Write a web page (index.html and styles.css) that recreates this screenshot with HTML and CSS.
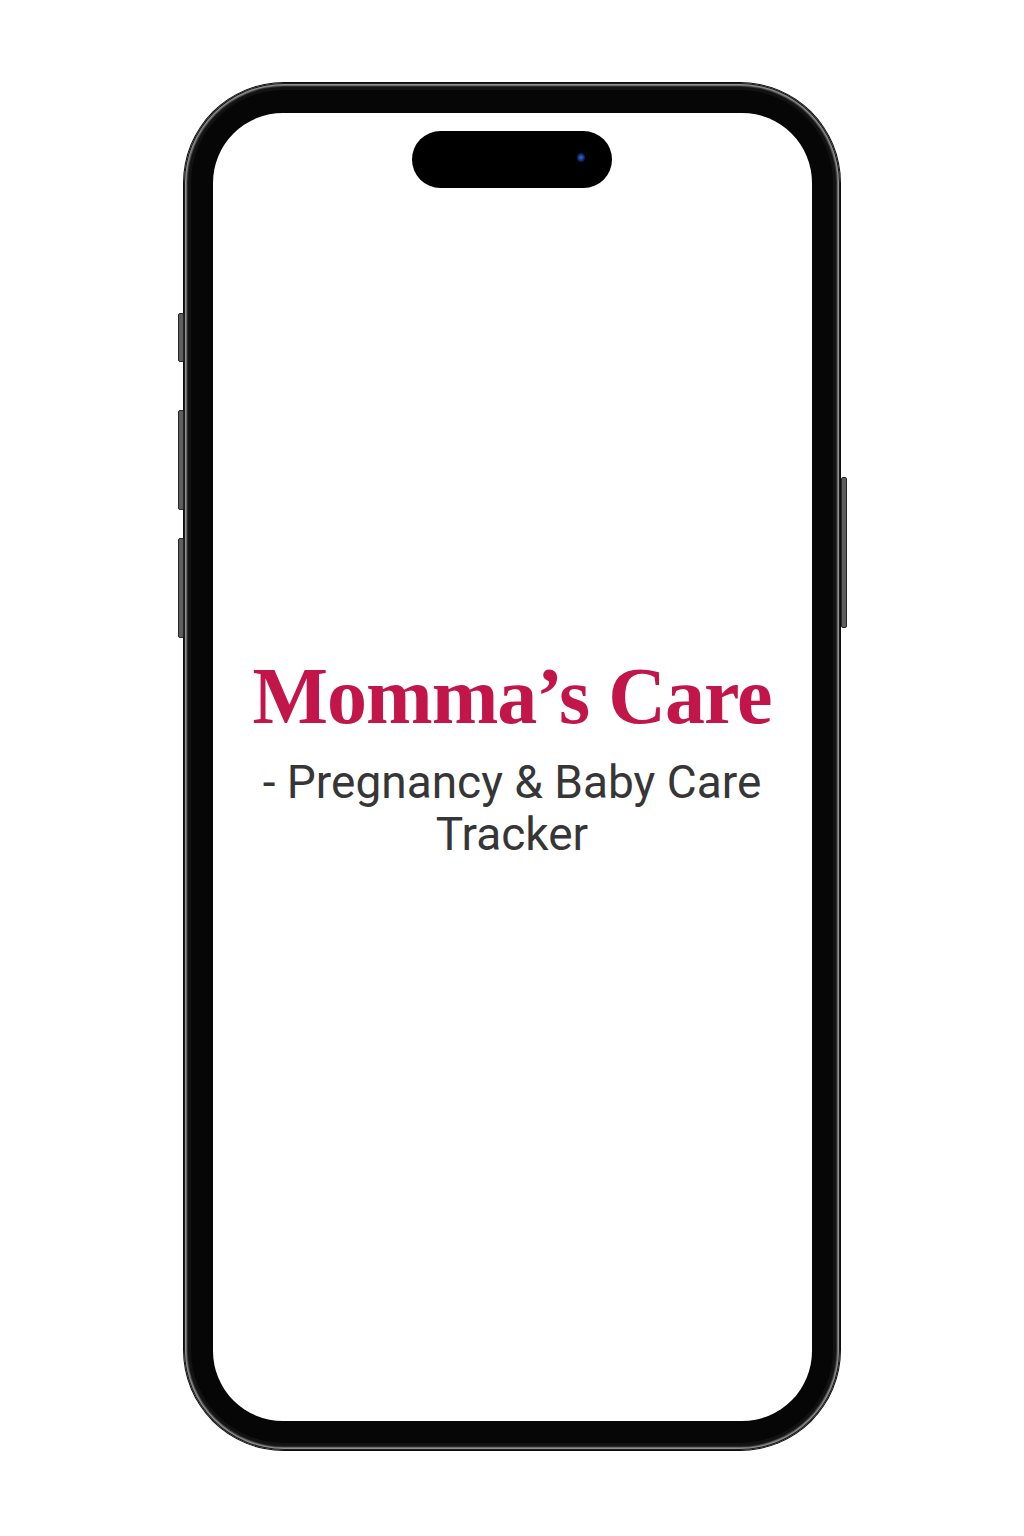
FILE: index.html
```html
<!DOCTYPE html>
<html lang="en">
<head>
<meta charset="utf-8">
<title>Momma's Care</title>
<link rel="stylesheet" href="styles.css">
</head>
<body>
<div class="stage">
  <div class="phone">
    <span class="btn btn-action"></span>
    <span class="btn btn-vol-up"></span>
    <span class="btn btn-vol-down"></span>
    <span class="btn btn-power"></span>
    <div class="screen">
      <div class="island"><span class="camera"></span></div>
      <div class="brand">
        <h1 class="title">Momma’s Care</h1>
        <p class="subtitle">- Pregnancy &amp; Baby Care<br>Tracker</p>
      </div>
    </div>
  </div>
</div>
</body>
</html>
```

FILE: styles.css
```css
html, body {
  margin: 0;
  padding: 0;
  background: #ffffff;
}

.stage {
  width: 1024px;
  height: 1536px;
  display: flex;
  justify-content: center;
  align-items: flex-start;
  padding-top: 83px;
  box-sizing: border-box;
}

.phone {
  position: relative;
  width: 656px;
  height: 1367px;
  box-sizing: border-box;
  padding: 30px 28px 29px 29px;
  border-radius: 100px;
  background: #060606;
  box-shadow:
    0 0 0 1px #0e0e0e,
    inset 0 0 0 1px #1a1a1a,
    inset 0 0 0 2px #909090,
    inset 0 0 0 3px #6a6a6a,
    inset 0 0 0 4px #2a2a2a,
    inset 0 0 0 7px #121212;
  margin-left: -1px;
}

.btn {
  position: absolute;
  width: 6px;
  background: #5e5e5e;
  border: 1px solid #262626;
  box-sizing: border-box;
  border-radius: 2px;
}

.btn-action   { left: -6px; top: 230px; height: 49px; }
.btn-vol-up   { left: -6px; top: 327px; height: 100px; }
.btn-vol-down { left: -6px; top: 455px; height: 100px; }
.btn-power    { right: -7px; top: 394px; height: 151px; }

.screen {
  position: relative;
  width: 100%;
  height: 100%;
  background: #ffffff;
  border-radius: 70px;
  display: flex;
  flex-direction: column;
  align-items: center;
  justify-content: center;
  overflow: hidden;
}

.island {
  position: absolute;
  top: 18px;
  left: 50%;
  transform: translateX(-50%);
  width: 200px;
  height: 57px;
  border-radius: 29px;
  background: #000000;
}

.camera {
  position: absolute;
  right: 27px;
  top: 22px;
  width: 8px;
  height: 9px;
  border-radius: 50%;
  background: radial-gradient(circle, #2f6fe0 0%, #0c2a6a 55%, #020814 100%);
}

.brand {
  display: flex;
  flex-direction: column;
  align-items: center;
  text-align: center;
  margin-top: -18px;
}

.title {
  margin: 0;
  font-family: "Liberation Serif", "DejaVu Serif", serif;
  font-weight: 700;
  font-size: 80px;
  line-height: 1;
  color: #c2164b;
  letter-spacing: -1px;
}

.subtitle {
  margin: 20px 0 0;
  font-family: Roboto, "Noto Sans", sans-serif;
  font-weight: 400;
  font-size: 46px;
  line-height: 52px;
  color: #363636;
}
```
